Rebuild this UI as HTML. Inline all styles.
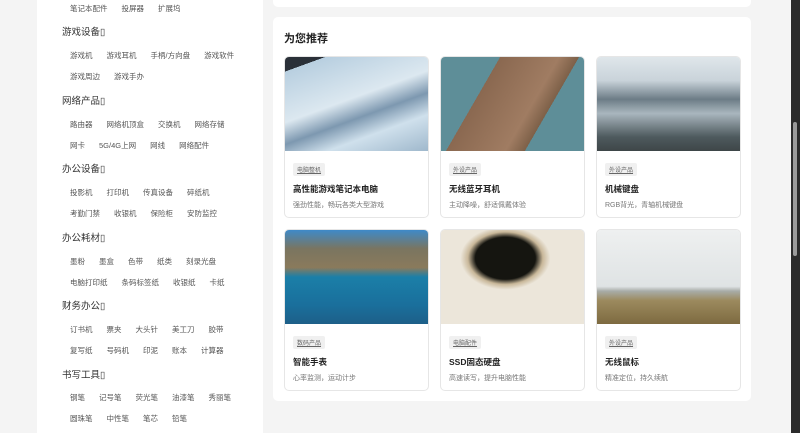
<!DOCTYPE html>
<html><head><meta charset="utf-8"><style>
*{margin:0;padding:0;box-sizing:border-box}
body{width:800px;height:433px;overflow:hidden;background:#f4f4f4;position:relative;font-family:"Liberation Sans","Noto Sans CJK SC",sans-serif}
.left{position:absolute;left:37px;top:0;width:226px;height:433px;background:#fff}
.h{position:absolute;left:25px;font-size:9.5px;color:#333;line-height:12px}
.r{position:absolute;left:33px;font-size:7.5px;color:#555;line-height:10px;white-space:nowrap}
.r span{margin-right:14px}
.top{position:absolute;left:273px;top:-10px;width:478px;height:17px;background:#fff;border-radius:5px}
.main{position:absolute;left:273px;top:17px;width:478px;height:384px;background:#fff;border-radius:5px}
.title{position:absolute;left:11px;top:13px;font-size:11px;font-weight:bold;color:#222}
.card{position:absolute;width:145px;height:162px;border:1px solid #e6e6e6;border-radius:5px;overflow:hidden;background:#fff}
.img{height:94px;width:100%}
.tag{position:absolute;left:8px;top:106px;background:#f0f0f0;border-radius:2px;font-size:6px;color:#666;padding:2px 4px;text-decoration:underline}
.ct{position:absolute;left:8px;top:126px;font-size:8.5px;color:#222;font-weight:bold}
.cd{position:absolute;left:8px;top:143px;font-size:7px;color:#777}
.sb{position:absolute;left:791px;top:0;width:9px;height:433px;background:#2b2b2b}
.th{position:absolute;left:793px;top:122px;width:4px;height:134px;background:#9a9a9a;border-radius:2px}
</style></head><body>
<div class="left">
<div class="r" style="top:4px"><span>笔记本配件</span><span>投屏器</span><span>扩展坞</span></div>
<div class="h" style="top:27px">游戏设备&#x25AF;</div>
<div class="r" style="top:51px"><span>游戏机</span><span>游戏耳机</span><span>手柄/方向盘</span><span>游戏软件</span></div>
<div class="r" style="top:72px"><span>游戏周边</span><span>游戏手办</span></div>
<div class="h" style="top:96px">网络产品&#x25AF;</div>
<div class="r" style="top:120px"><span>路由器</span><span>网络机顶盒</span><span>交换机</span><span>网络存储</span></div>
<div class="r" style="top:141px"><span>网卡</span><span>5G/4G上网</span><span>网线</span><span>网络配件</span></div>
<div class="h" style="top:164px">办公设备&#x25AF;</div>
<div class="r" style="top:188px"><span>投影机</span><span>打印机</span><span>传真设备</span><span>碎纸机</span></div>
<div class="r" style="top:209px"><span>考勤门禁</span><span>收银机</span><span>保险柜</span><span>安防监控</span></div>
<div class="h" style="top:233px">办公耗材&#x25AF;</div>
<div class="r" style="top:257px"><span>墨粉</span><span>墨盒</span><span>色带</span><span>纸类</span><span>刻录光盘</span></div>
<div class="r" style="top:278px"><span>电脑打印纸</span><span>条码标签纸</span><span>收银纸</span><span>卡纸</span></div>
<div class="h" style="top:301px">财务办公&#x25AF;</div>
<div class="r" style="top:325px"><span>订书机</span><span>票夹</span><span>大头针</span><span>美工刀</span><span>胶带</span></div>
<div class="r" style="top:346px"><span>复写纸</span><span>号码机</span><span>印泥</span><span>账本</span><span>计算器</span></div>
<div class="h" style="top:370px">书写工具&#x25AF;</div>
<div class="r" style="top:393px"><span>钢笔</span><span>记号笔</span><span>荧光笔</span><span>油漆笔</span><span>秀丽笔</span></div>
<div class="r" style="top:414px"><span>圆珠笔</span><span>中性笔</span><span>笔芯</span><span>铅笔</span></div>
</div>
<div class="top"></div>
<div class="main">
<div class="title">为您推荐</div>
<div class="card" style="left:11px;top:39px"><div class="img" style="background:linear-gradient(160deg,#2a3038 0 10%,#b8cfe0 10%,#dce8f0 45%,#7d98b0 60%,#cfe0ec 75%,#9fb8cc)"></div><div class="tag">电脑整机</div><div class="ct">高性能游戏笔记本电脑</div><div class="cd">强劲性能，畅玩各类大型游戏</div></div>
<div class="card" style="left:167px;top:39px"><div class="img" style="background:linear-gradient(120deg,#5e8e98 0 30%,#8a6850 30%,#a07c62 60%,#7d6048 70%,#5e8e98 70%)"></div><div class="tag">外设产品</div><div class="ct">无线蓝牙耳机</div><div class="cd">主动降噪，舒适佩戴体验</div></div>
<div class="card" style="left:323px;top:39px"><div class="img" style="background:linear-gradient(180deg,#dfe6ea 0,#c9d3da 25%,#6c7c86 45%,#a9b6be 60%,#4e5a5e 85%,#3e4648)"></div><div class="tag">外设产品</div><div class="ct">机械键盘</div><div class="cd">RGB背光，青轴机械键盘</div></div>
<div class="card" style="left:11px;top:212px"><div class="img" style="background:linear-gradient(180deg,#3f8ac8 0,#7a7560 20%,#8a7a5c 40%,#1b7fa8 50%,#1a6f9c 80%,#1d5f88)"></div><div class="tag">数码产品</div><div class="ct">智能手表</div><div class="cd">心率监测，运动计步</div></div>
<div class="card" style="left:167px;top:212px"><div class="img" style="background:radial-gradient(ellipse 50px 35px at 45% 30%,#151510 60%,#c9b89a 75%,#ece6da 90%),#f4f0e8"></div><div class="tag">电脑配件</div><div class="ct">SSD固态硬盘</div><div class="cd">高速读写，提升电脑性能</div></div>
<div class="card" style="left:323px;top:212px"><div class="img" style="background:linear-gradient(180deg,#eef0f0 0,#dfe3e4 60%,#a8aca8 65%,#9c8a5e 75%,#7d6a40)"></div><div class="tag">外设产品</div><div class="ct">无线鼠标</div><div class="cd">精准定位，持久续航</div></div>
</div>
<div class="sb"></div><div class="th"></div>
</body></html>
